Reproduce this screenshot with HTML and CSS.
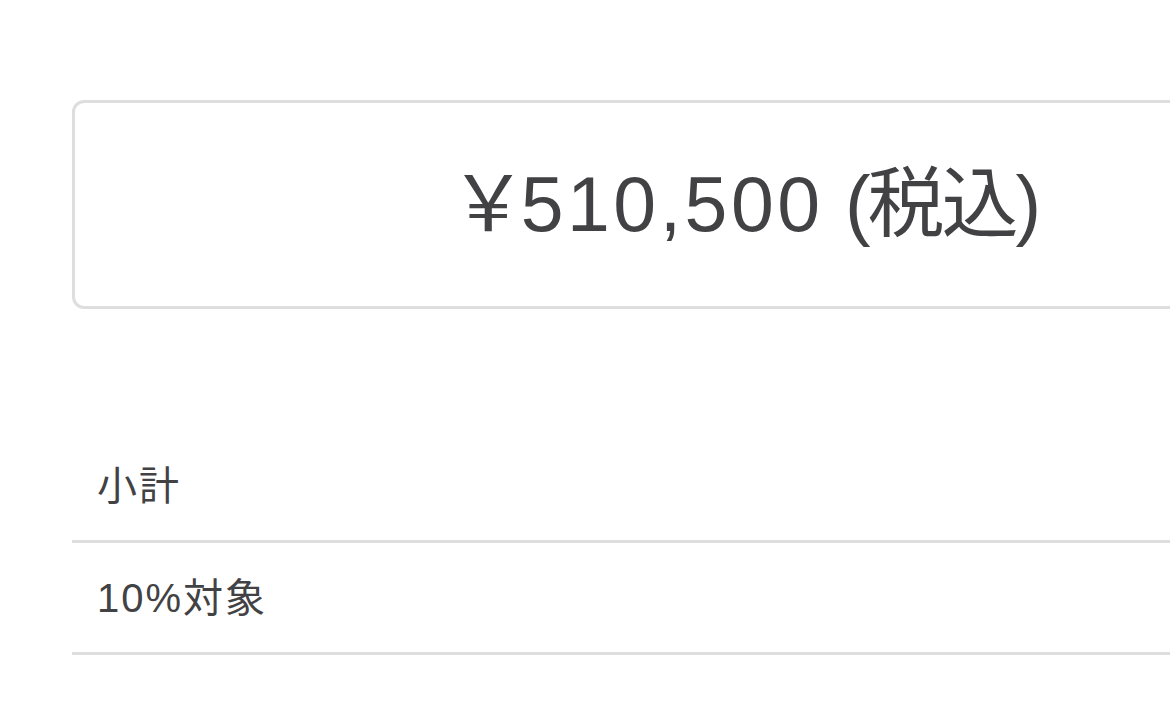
FILE: index.html
```html
<!DOCTYPE html>
<html lang="ja">
<head>
<meta charset="utf-8">
<link rel="stylesheet" href="styles.css">
</head>
<body>
<div class="page">
  <div class="total"><span class="yen">￥</span><span class="num">510,500</span>&nbsp;<span class="tax">(税込)</span></div>
  <div class="rows">
    <div class="row">小計</div>
    <div class="row">10%対象</div>
  </div>
</div>
</body>
</html>
```
FILE: styles.css
```css
html, body {
  margin: 0;
  background: #ffffff;
  overflow: hidden;
}
body {
  font-family: "Liberation Sans", "Noto Sans CJK JP", sans-serif;
  color: #424244;
}
.page {
  padding: 100px 0 0 72px;
}
.total {
  width: 1338px;
  height: 203px;
  border: 3px solid #dedede;
  border-radius: 12px;
  display: flex;
  align-items: center;
  justify-content: center;
  font-size: 77px;
  line-height: 1;
}
.yen {
  letter-spacing: -6px;
}
.num {
  letter-spacing: 3.5px;
}
.tax {
  letter-spacing: -3px;
}
.rows {
  margin-top: 122px;
}
.row {
  height: 109px;
  border-bottom: 3px solid #dedede;
  display: flex;
  align-items: center;
  padding-left: 25px;
  font-size: 40px;
  line-height: 1;
  letter-spacing: 2px;
}
```
